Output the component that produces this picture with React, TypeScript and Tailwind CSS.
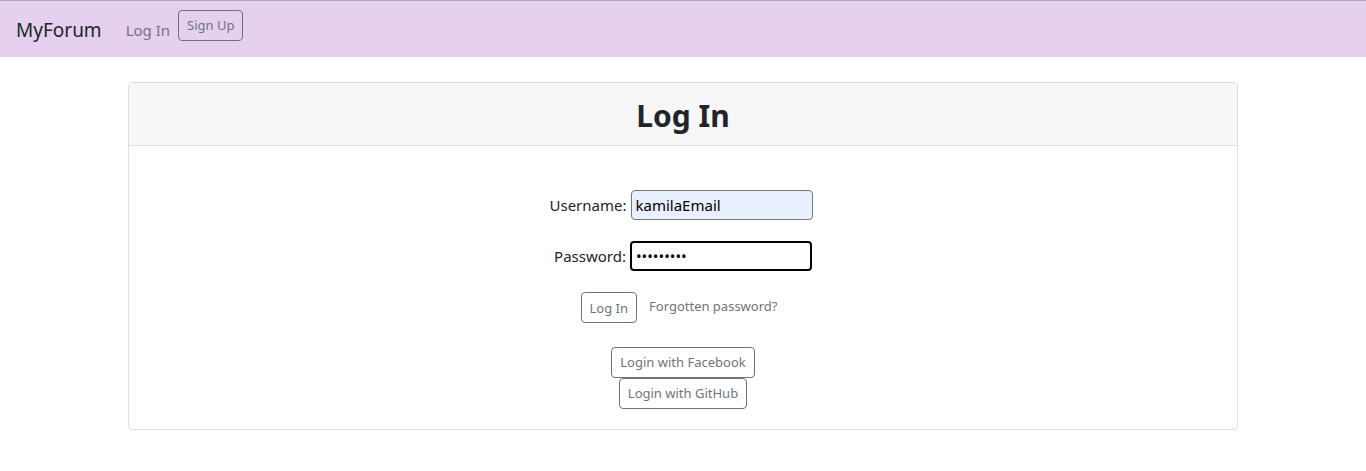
const App = () => {
  return (
    <div className="min-h-screen bg-white text-[#212529]">
      <div className="font-['Noto_Sans',sans-serif]">
        <nav className="h-[57px] bg-[#e5d0ef] border-t border-[#a9a9a9] flex items-center pl-4">
          <span className="text-[19px] text-[#212529] mr-6 mt-[3px]">MyForum</span>
          <a className="text-[15px] text-[#767676] mr-2 mt-[3px]">Log In</a>
          <button className="text-[13px] text-[#6c757d] border border-[#6c757d] rounded px-2 h-[31px] -mt-[7px]">Sign Up</button>
        </nav>

        <div className="w-[1110px] mx-auto mt-[25px] border border-[#dfdfdf] rounded">
          <div className="h-[63px] bg-[#f7f7f7] border-b border-[#dfdfdf] flex items-center justify-center">
            <h1 className="text-[30px] font-bold mt-[2px]">Log In</h1>
          </div>
          <div className="flex flex-col items-center pt-[44px] pb-[20px]">
            <div className="flex items-center gap-1 text-[15px] pr-[4px]">
              <label>Username:</label>
              <input
                defaultValue="kamilaEmail"
                className="w-[182px] h-[30px] bg-[#e8f0fe] border border-[#767676] rounded-sm px-1 text-[15px] text-black outline-none"
              />
            </div>
            <div className="flex items-center gap-1 text-[15px] mt-[21px]">
              <label>Password:</label>
              <input
                type="password"
                defaultValue="123456789"
                className="w-[182px] h-[30px] border-2 border-black rounded px-1 text-[15px] text-black outline-none"
              />
            </div>
            <div className="flex items-center gap-3 mt-[21px] text-[13px] text-[#6c757d] pr-[8px]">
              <button className="border border-[#6c757d] rounded px-2 h-[31px] pt-[2px]">Log In</button>
              <a className="-mt-[2px]">Forgotten password?</a>
            </div>
            <div className="flex flex-col items-center mt-[24px] text-[13px] text-[#6c757d]">
              <button className="border border-[#6c757d] rounded px-2 h-[31px] pt-[1px]">Login with Facebook</button>
              <button className="border border-[#6c757d] rounded px-2 h-[31px]">Login with GitHub</button>
            </div>
          </div>
        </div>
      </div>
    </div>
  );
};

export default App;
